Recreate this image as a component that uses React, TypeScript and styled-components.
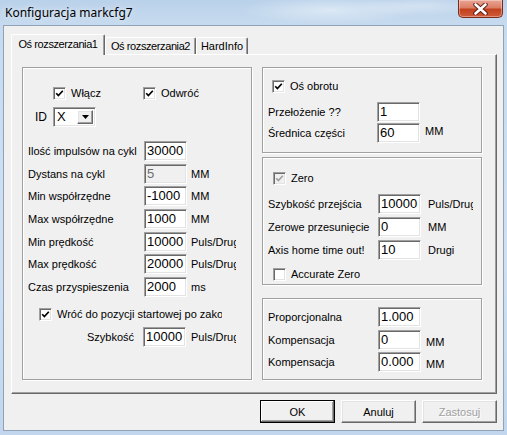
import React from 'react';
import styled, { createGlobalStyle, css } from 'styled-components';

const GlobalStyle = createGlobalStyle`
	html, body {
		margin: 0;
		padding: 0;
	}
	body {
		width: 507px;
		height: 435px;
		overflow: hidden;
		font-family: "Liberation Sans", Arial, sans-serif;
		font-size: 11px;
		color: #000;
	}
`;

const sunken = css`
	box-sizing: border-box;
	border-top: 1px solid #a0a0a0;
	border-left: 1px solid #a0a0a0;
	border-bottom: 1px solid #fff;
	border-right: 1px solid #fff;
	box-shadow: inset 1px 1px 0 #696969, inset -1px -1px 0 #e3e3e3;
`;

const raised = css`
	box-sizing: border-box;
	border-top: 1px solid #fff;
	border-left: 1px solid #fff;
	border-bottom: 1px solid #696969;
	border-right: 1px solid #696969;
	box-shadow: inset -1px -1px 0 #a0a0a0, inset 1px 1px 0 #e3e3e3;
`;

const Window = styled.div`
	width: 507px;
	height: 435px;
	box-sizing: border-box;
	padding: 0 3px 4px 3px;
	display: flex;
	flex-direction: column;
	background:
		radial-gradient(ellipse 90px 14px at 330px 10px, rgba(255, 255, 255, 0.45), transparent),
		radial-gradient(ellipse 70px 10px at 420px 6px, rgba(255, 255, 255, 0.35), transparent),
		linear-gradient(180deg, #b9d1ea 0%, #c7dbef 25px, #cfe0f2 60%, #c2d7ed 100%);
`;

const TitleBar = styled.div`
	height: 25px;
	display: flex;
	justify-content: space-between;
	align-items: flex-start;
`;

const Title = styled.div`
	padding: 4px 0 0 2px;
	font-family: "Noto Sans", "Liberation Sans", sans-serif;
	font-size: 12px;
	color: #000;
	text-shadow: 0 0 6px rgba(255, 255, 255, 0.9);
`;

const CloseButton = styled.div`
	width: 45px;
	height: 18px;
	margin-right: 1px;
	box-sizing: border-box;
	border: 1px solid #7b2a1c;
	border-top: none;
	border-radius: 0 0 5px 5px;
	background: linear-gradient(180deg, #e9a594 0%, #dc7e66 45%, #c2421f 55%, #d05a3a 100%);
	box-shadow: inset 0 0 0 1px rgba(255, 255, 255, 0.35);
	display: flex;
	align-items: center;
	justify-content: center;
`;

const Client = styled.div`
	flex: 1;
	box-sizing: border-box;
	background: #f0f0f0;
	border: 1px solid #8fa2b8;
	padding: 8px 6px 0 7px;
	display: flex;
	flex-direction: column;
`;

const TabStrip = styled.div`
	height: 20px;
	display: flex;
	align-items: flex-end;
	position: relative;
	z-index: 1;
`;

const Tab = styled.div<{ $width: number; $active?: boolean; $tight?: boolean }>`
	width: ${p => p.$width}px;
	height: ${p => (p.$active ? 21 : 17)}px;
	margin-bottom: ${p => (p.$active ? -1 : 0)}px;
	box-sizing: border-box;
	background: #f0f0f0;
	border-top: 1px solid #fff;
	border-left: 1px solid #fff;
	border-right: 1px solid #696969;
	border-radius: 2px 2px 0 0;
	box-shadow: inset -1px 0 0 #a0a0a0;
	display: flex;
	align-items: center;
	justify-content: center;
	padding-bottom: ${p => (p.$active ? 2 : 0)}px;
	letter-spacing: ${p => (p.$tight ? -0.4 : 0)}px;
	white-space: nowrap;
`;

const TabPage = styled.div`
	height: 340px;
	box-sizing: border-box;
	border-top: 1px solid #fff;
	border-left: 1px solid #fff;
	border-right: 1px solid #696969;
	border-bottom: 1px solid #696969;
	box-shadow: inset -1px -1px 0 #a0a0a0;
	padding: 12px 14px 0 10px;
	display: flex;
	gap: 10px;
`;

const GroupBox = styled.div<{ $width?: number; $height: number; $pad?: number; $mt?: number }>`
	width: ${p => (p.$width ? `${p.$width}px` : 'auto')};
	height: ${p => p.$height}px;
	margin-top: ${p => p.$mt ?? 0}px;
	box-sizing: border-box;
	border: 1px solid #a0a0a0;
	box-shadow: 1px 1px 0 #fff, inset 1px 1px 0 #fff;
	padding-top: ${p => p.$pad ?? 0}px;
	display: flex;
	flex-direction: column;
`;

const Column = styled.div`
	width: 221px;
	display: flex;
	flex-direction: column;
`;

const CheckRow = styled.div<{ $indent: number; $mt?: number }>`
	height: 20px;
	margin-top: ${p => p.$mt ?? 0}px;
	padding-left: ${p => p.$indent}px;
	display: flex;
	align-items: center;
`;

const CheckItem = styled.label<{ $width?: number }>`
	width: ${p => (p.$width ? `${p.$width}px` : 'auto')};
	display: flex;
	align-items: center;
	gap: 5px;
	white-space: nowrap;
	overflow: hidden;
`;

const Box = styled.span<{ $disabled?: boolean }>`
	${sunken};
	width: 13px;
	height: 13px;
	flex: none;
	background: ${p => (p.$disabled ? '#f0f0f0' : '#fff')};
	display: flex;
	align-items: center;
	justify-content: center;
`;

const IdRow = styled.div`
	height: 20px;
	margin-top: 4px;
	padding-left: 12px;
	display: flex;
	align-items: center;
`;

const IdLabel = styled.span`
	width: 18px;
	font-size: 12px;
`;

const Combo = styled.div`
	${sunken};
	width: 43px;
	height: 20px;
	background: #fff;
	display: flex;
	padding: 2px;
	font-size: 13px;
	line-height: 13px;
`;

const ComboText = styled.span`
	flex: 1;
	padding-left: 1px;
`;

const ComboButton = styled.span`
	${raised};
	width: 16px;
	background: #f0f0f0;
	display: flex;
	align-items: center;
	justify-content: center;
`;

const Fields = styled.div<{ $mt: number; $row: number; $label: number }>`
	margin-top: ${p => p.$mt}px;
	display: grid;
	grid-template-columns: ${p => p.$label}px 43px 1fr;
	grid-auto-rows: ${p => p.$row}px;
	align-items: center;
`;

const FieldLabel = styled.span<{ $right?: boolean; $pad: number }>`
	white-space: nowrap;
	text-align: ${p => (p.$right ? 'right' : 'left')};
	padding-left: ${p => (p.$right ? 0 : p.$pad)}px;
	padding-right: ${p => (p.$right ? p.$pad : 0)}px;
`;

const Edit = styled.div<{ $disabled?: boolean }>`
	${sunken};
	width: 43px;
	height: 20px;
	background: ${p => (p.$disabled ? '#f0f0f0' : '#fff')};
	color: ${p => (p.$disabled ? '#6d6d6d' : '#000')};
	font-size: 13px;
	line-height: 17px;
	padding-left: 2px;
	white-space: nowrap;
	overflow: hidden;
`;

const Unit = styled.span<{ $gap: number; $dy?: number }>`
	padding-left: ${p => p.$gap}px;
	white-space: nowrap;
	overflow: hidden;
	max-width: 45px;
	position: relative;
	top: ${p => p.$dy ?? 0}px;
`;

const ButtonRow = styled.div`
	margin-top: 6px;
	display: flex;
	justify-content: flex-end;
	gap: 6px;
`;

const Button = styled.div<{ $default?: boolean; $disabled?: boolean }>`
	${raised};
	width: 75px;
	height: 23px;
	background: #f0f0f0;
	display: flex;
	align-items: center;
	justify-content: center;
	color: ${p => (p.$disabled ? '#a0a0a0' : '#000')};
	text-shadow: ${p => (p.$disabled ? '1px 1px 0 #fff' : 'none')};
	${p =>
		p.$default &&
		css`
			outline: 1px solid #000;
			outline-offset: -1px;
			box-shadow: inset -1px -1px 0 #696969, inset 1px 1px 0 #fff, inset -2px -2px 0 #a0a0a0;
		`}
`;

function Check({ disabled }: { disabled?: boolean }) {
	return (
		<svg width="9" height="9" viewBox="0 0 9 9">
			<polyline
				points="1.2,4.2 3.4,6.6 7.8,1.8"
				fill="none"
				stroke={disabled ? '#a0a0a0' : '#000'}
				strokeWidth="1.7"
			/>
		</svg>
	);
}

interface CheckboxProps {
	label: string;
	checked?: boolean;
	disabled?: boolean;
	width?: number;
}

function Checkbox({ label, checked, disabled, width }: CheckboxProps) {
	return (
		<CheckItem $width={width}>
			<Box $disabled={disabled}>{checked && <Check disabled={disabled} />}</Box>
			<span>{label}</span>
		</CheckItem>
	);
}

interface FieldProps {
	label: string;
	value: string;
	unit?: string;
	disabled?: boolean;
	right?: boolean;
	pad: number;
	gap: number;
	unitDy?: number;
}

function Field({ label, value, unit, disabled, right, pad, gap, unitDy }: FieldProps) {
	return (
		<>
			<FieldLabel $right={right} $pad={pad}>
				{label}
			</FieldLabel>
			<Edit $disabled={disabled}>{value}</Edit>
			<Unit $gap={gap} $dy={unitDy}>
				{unit}
			</Unit>
		</>
	);
}

const leftFields = [
	{ label: 'Ilość impulsów na cykl', value: '30000' },
	{ label: 'Dystans na cykl', value: '5', unit: 'MM', disabled: true },
	{ label: 'Min współrzędne', value: '-1000', unit: 'MM' },
	{ label: 'Max współrzędne', value: '1000', unit: 'MM' },
	{ label: 'Min prędkość', value: '10000', unit: 'Puls/Drugi' },
	{ label: 'Max prędkość', value: '20000', unit: 'Puls/Drugi' },
	{ label: 'Czas przyspieszenia', value: '2000', unit: 'ms' }
];

const App: React.FC = () => {
	return (
		<>
			<GlobalStyle />
			<Window>
				<TitleBar>
					<Title>Konfiguracja markcfg7</Title>
					<CloseButton>
						<svg width="15" height="12" viewBox="0 0 15 12">
							<path
								d="M2.5 1.5 L12.5 10.5 M12.5 1.5 L2.5 10.5"
								stroke="#5a1a10"
								strokeWidth="4.4"
								strokeLinecap="round"
							/>
							<path
								d="M2.5 1.5 L12.5 10.5 M12.5 1.5 L2.5 10.5"
								stroke="#fff"
								strokeWidth="2.6"
								strokeLinecap="round"
							/>
						</svg>
					</CloseButton>
				</TitleBar>
				<Client>
					<TabStrip>
						<Tab $width={94} $active $tight>
							Oś rozszerzania1
						</Tab>
						<Tab $width={91} $tight>
							Oś rozszerzania2
						</Tab>
						<Tab $width={52}>HardInfo</Tab>
					</TabStrip>
					<TabPage>
						<GroupBox $width={231} $height={313} $pad={15}>
							<CheckRow $indent={30}>
								<Checkbox label="Włącz" checked width={90} />
								<Checkbox label="Odwróć" checked />
							</CheckRow>
							<IdRow>
								<IdLabel>ID</IdLabel>
								<Combo>
									<ComboText>X</ComboText>
									<ComboButton>
										<svg width="7" height="4" viewBox="0 0 7 4">
											<path d="M0 0 H7 L3.5 4 Z" fill="#000" />
										</svg>
									</ComboButton>
								</Combo>
							</IdRow>
							<Fields $mt={13} $row={22.6} $label={121}>
								{leftFields.map(f => (
									<Field key={f.label} {...f} pad={5} gap={4} />
								))}
							</Fields>
							<CheckRow $indent={16} $mt={6}>
								<Checkbox label="Wróć do pozycji startowej po zakończeniu" checked width={183} />
							</CheckRow>
							<Fields $mt={2} $row={22.6} $label={120}>
								<Field label="Szybkość" value="10000" unit="Puls/Drugi" right pad={9} gap={5} />
							</Fields>
						</GroupBox>
						<Column>
							<GroupBox $height={86} $pad={8}>
								<CheckRow $indent={9}>
									<Checkbox label="Oś obrotu" checked />
								</CheckRow>
								<Fields $mt={5} $row={21} $label={114}>
									<Field label="Przełożenie ??" value="1" pad={5} gap={5} />
									<Field label="Średnica części" value="60" unit="MM" pad={5} gap={5} unitDy={-2} />
								</Fields>
							</GroupBox>
							<GroupBox $height={128} $pad={10} $mt={4}>
								<CheckRow $indent={10}>
									<Checkbox label="Zero" checked disabled />
								</CheckRow>
								<Fields $mt={4} $row={23} $label={115}>
									<Field label="Szybkość przejścia" value="10000" unit="Puls/Drugi" pad={5} gap={7} />
									<Field label="Zerowe przesunięcie" value="0" unit="MM" pad={5} gap={7} />
									<Field label="Axis home time out!" value="10" unit="Drugi" pad={5} gap={7} />
								</Fields>
								<CheckRow $indent={10} $mt={3}>
									<Checkbox label="Accurate Zero" />
								</CheckRow>
							</GroupBox>
							<GroupBox $height={82} $pad={7} $mt={13}>
								<Fields $mt={0} $row={22.5} $label={115}>
									<Field label="Proporcjonalna" value="1.000" pad={5} gap={5} />
									<Field label="Kompensacja" value="0" unit="MM" pad={5} gap={5} unitDy={2} />
									<Field label="Kompensacja" value="0.000" unit="MM" pad={5} gap={5} unitDy={2} />
								</Fields>
							</GroupBox>
						</Column>
					</TabPage>
					<ButtonRow>
						<Button $default>OK</Button>
						<Button>Anuluj</Button>
						<Button $disabled>Zastosuj</Button>
					</ButtonRow>
				</Client>
			</Window>
		</>
	);
};

export default App;
